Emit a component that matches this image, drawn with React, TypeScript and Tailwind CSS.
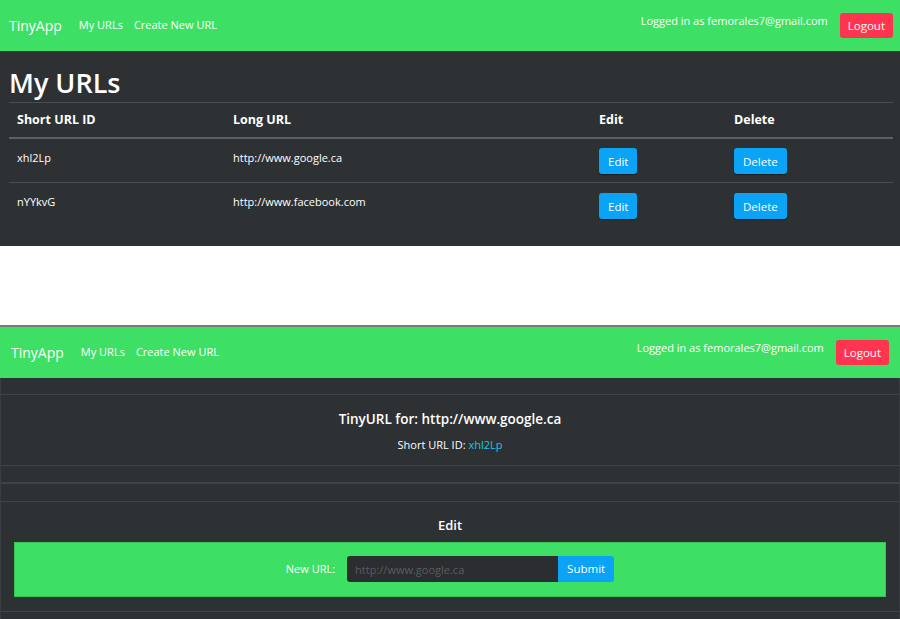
import { FunctionComponent } from "react";

interface UrlRow {
  id: string;
  longUrl: string;
}

const rows: UrlRow[] = [
  { id: "xhl2Lp", longUrl: "http://www.google.ca" },
  { id: "nYYkvG", longUrl: "http://www.facebook.com" },
];

const NavBar: FunctionComponent<{ pad: string }> = ({ pad }) => {
  return (
    <div className={`h-[51px] bg-[#3ddf64] flex items-center justify-between text-white ${pad}`}>
      <div className="flex items-center">
        <span className="text-[14px] mr-[17px]">TinyApp</span>
        <span className="text-[11px] mr-[11px]">My URLs</span>
        <span className="text-[11px]">Create New URL</span>
      </div>
      <div className="flex items-center">
        <span className="text-[11px] -mt-[9px] mr-[12px]">Logged in as femorales7@gmail.com</span>
        <button className="h-[25px] px-[8px] bg-[#ff3550] rounded-[3px] text-[11.5px] text-white">
          Logout
        </button>
      </div>
    </div>
  );
};

const App: FunctionComponent = () => {
  return (
    <div className="w-[900px] bg-white" style={{ fontFamily: '"Open Sans", "Noto Sans", sans-serif' }}>
      {/* list page */}
      <div className="h-[246px] bg-[#2e3134]">
        <NavBar pad="pl-[9px] pr-[7px]" />
        <div className="px-[9px] pr-[7px]">
          <h1 className="text-[27px] font-semibold text-white leading-none pt-[18px] pb-[6px]">My URLs</h1>
          <table className="w-full text-white text-[11px] border-t border-[#4a4d50]">
            <thead>
              <tr className="border-b-2 border-[#5d6063] h-[35px] font-bold text-left text-[12.5px]">
                <th className="pl-[8px] w-[224px] pt-[2px]">Short URL ID</th>
                <th className="w-[366px] pt-[2px]">Long URL</th>
                <th className="w-[135px] pt-[2px]">Edit</th>
                <th className="pt-[2px]">Delete</th>
              </tr>
            </thead>
            <tbody>
              {rows.map((r, i) => (
                <tr key={r.id} className={`h-[45px] ${i === 0 ? "border-b border-[#4a4d50]" : ""}`}>
                  <td className="pl-[8px] align-top pt-[11px]">{r.id}</td>
                  <td className="align-top pt-[11px]">{r.longUrl}</td>
                  <td className="pt-[2px]">
                    <button className="h-[26px] px-[9px] bg-[#0aa3f5] rounded-[3px] text-[11.5px] shadow-[0_1px_1px_rgba(0,0,0,0.5)]">Edit</button>
                  </td>
                  <td className="pt-[2px]">
                    <button className="h-[26px] px-[9px] bg-[#0aa3f5] rounded-[3px] text-[11.5px] shadow-[0_1px_1px_rgba(0,0,0,0.5)]">Delete</button>
                  </td>
                </tr>
              ))}
            </tbody>
          </table>
        </div>
      </div>

      <div className="h-[79px] bg-white" />

      {/* show page */}
      <div className="bg-[#2e3134] border-t-2 border-[#7a7a7a] min-h-[294px]">
        <NavBar pad="pl-[11px] pr-[11px]" />
        <div className="border-x border-[#3a3d40]">
          <div className="border-b border-[#404346]">
            <div className="h-[17px] border-b border-[#404346]" />
            <div className="h-[70px] flex flex-col items-center text-white">
              <div className="text-[13.5px] font-semibold mt-[14px]">TinyURL for: http://www.google.ca</div>
              <div className="text-[11px] mt-[8px]">
                Short URL ID: <span className="text-[#1ec5e0]">xhl2Lp</span>
              </div>
            </div>
            <div className="h-[17px] border-t border-[#404346]" />
          </div>
          <div className="border-t border-[#404346]">
            <div className="h-[18px] border-b border-[#404346]" />
            <div className="px-[13px] pb-[14px]">
              <div className="text-center text-white font-semibold text-[13px] pt-[14px] pb-[6px]">Edit</div>
              <div className="h-[55px] bg-[#3ddf64] flex items-center justify-center border border-[#35c456]">
                <span className="text-white text-[11px] mr-[12px]">New URL:</span>
                <input
                  className="w-[211px] h-[26px] bg-[#2b2d30] rounded-l-[3px] px-[8px] text-[11px] text-[#8a8d90] outline-none"
                  placeholder="http://www.google.ca"
                />
                <button className="h-[26px] px-[9px] bg-[#0aa3f5] rounded-r-[3px] text-white text-[11.5px]">Submit</button>
              </div>
            </div>
            <div className="h-[8px] border-t border-[#404346]" />
          </div>
        </div>
      </div>
    </div>
  );
};

export default App;
